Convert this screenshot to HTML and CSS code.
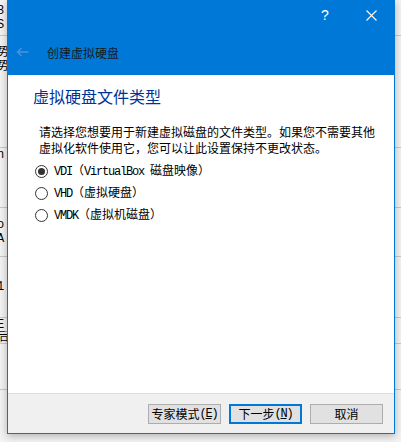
FILE: index.html
```html
<!DOCTYPE html>
<html lang="zh-CN">
<head>
<meta charset="utf-8">
<title>创建虚拟硬盘</title>
<link rel="stylesheet" href="styles.css">
</head>
<body>
<div class="backdrop">
  <div class="brow r1"><span class="frag">8</span><span class="frag">S</span></div>
  <div class="brow r2"><span class="frag">势</span><span class="frag">势</span></div>
  <div class="brow r3"><span class="frag">n</span></div>
  <div class="brow r4"><span class="frag">o</span><span class="frag">A</span></div>
  <div class="brow r5"><span class="frag">1</span></div>
  <div class="brow r6"><span class="frag">E</span><span class="frag">后</span></div>
  <div class="brow r7"></div>
  <div class="brow r8"></div>
</div>

<div class="dialog">
  <div class="titlebar">
    <div class="tbtn">?</div>
    <div class="tbtn">
      <svg width="11" height="11" viewBox="0 0 11 11"><path d="M0.5 0.5L10.5 10.5M10.5 0.5L0.5 10.5" stroke="#fff" stroke-width="1.1" fill="none"/></svg>
    </div>
  </div>
  <div class="header">
    <svg class="back" width="13" height="10" viewBox="0 0 13 10"><path d="M12.5 5H1.5M5.5 1L1.5 5L5.5 9" stroke="#4d92d6" stroke-width="1.4" fill="none"/></svg>
    <span class="htitle">创建虚拟硬盘</span>
  </div>
  <div class="content">
    <h1 class="heading">虚拟硬盘文件类型</h1>
    <p class="desc">请选择您想要用于新建虚拟磁盘的文件类型。如果您不需要其他<br>虚拟化软件使用它，您可以让此设置保持不更改状态。</p>
    <div class="options">
      <div class="opt"><span class="radio checked"></span><span class="label"><span class="mono">VDI</span>（<span class="mono">VirtualBox </span>磁盘映像）</span></div>
      <div class="opt"><span class="radio"></span><span class="label"><span class="mono">VHD</span>（虚拟硬盘）</span></div>
      <div class="opt"><span class="radio"></span><span class="label"><span class="mono">VMDK</span>（虚拟机磁盘）</span></div>
    </div>
  </div>
  <div class="footer">
    <button class="btn">专家模式<span class="mono">(<u>E</u>)</span></button>
    <button class="btn default">下一步<span class="mono">(<u>N</u>)</span></button>
    <button class="btn">取消</button>
  </div>
</div>
</body>
</html>
```

FILE: styles.css
```css
* { box-sizing: border-box; }
html, body { margin: 0; padding: 0; }
body {
  width: 401px;
  height: 442px;
  overflow: hidden;
  position: relative;
  background: #f0f0f0;
  font-family: "Noto Sans CJK SC", "Noto Sans", sans-serif;
  font-size: 12px;
  color: #000;
}
.mono {
  font-family: "Liberation Mono", monospace;
  font-size: 12px;
  letter-spacing: -1.2px;
}

/* background window */
.backdrop {
  display: flex;
  flex-direction: column;
  width: 401px;
  height: 442px;
  background: #f3f3f3;
  font-family: "Liberation Mono", "Noto Sans CJK SC", monospace;
  font-size: 12px;
}
.brow {
  border-bottom: 1px solid #c8c8c8;
  display: flex;
  flex-direction: column;
  justify-content: center;
  padding-left: 0;
  line-height: 14px;
  overflow: hidden;
}
.frag { display: block; width: 12px; overflow: hidden; margin-left: -3px; }
.r1 { height: 36px; }
.r2 { height: 112px; justify-content: flex-start; padding-top: 10px; }
.r3 { height: 60px; justify-content: flex-start; padding-top: 0; }
.r4 { height: 49px; }
.r5 { height: 61px; }
.r6 { height: 26px; }
.r7 { height: 46px; }
.r8 { flex: 1; border-bottom: none; }

/* dialog */
.dialog {
  position: absolute;
  left: 7px;
  top: 0;
  width: 388px;
  height: 434px;
  display: flex;
  flex-direction: column;
  border: 1px solid #0078d7;
  border-top: none;
  background: #fff;
  box-shadow: 0 2px 8px rgba(0,0,0,0.28);
}
.titlebar {
  height: 30px;
  background: #0078d7;
  display: flex;
  justify-content: flex-end;
}
.tbtn {
  width: 46px;
  height: 30px;
  display: flex;
  align-items: center;
  justify-content: center;
  color: #fff;
  font-family: "Liberation Sans", sans-serif;
  font-size: 14px;
}
.header {
  height: 45px;
  background: #0078d7;
  display: flex;
  align-items: center;
  padding: 1px 0 0 8px;
  gap: 18px;
}
.back { display: block; margin-top: -2px; }
.htitle { color: #1a1a1a; font-size: 12px; line-height: 16px; margin-top: -1px; }

.content {
  flex: 1;
  padding: 11px 0 0 25px;
}
.heading {
  margin: 0;
  font-size: 16px;
  font-weight: normal;
  line-height: 20px;
  color: #003399;
}
.desc {
  margin: 18px 0 0 6px;
  line-height: 16px;
  white-space: nowrap;
}
.options {
  margin: 4px 0 0 2px;
  display: flex;
  flex-direction: column;
}
.opt {
  height: 22px;
  display: flex;
  align-items: center;
  gap: 6px;
}
.radio {
  width: 13px;
  height: 13px;
  border: 1px solid #333;
  border-radius: 50%;
  background: #fff;
  display: flex;
  align-items: center;
  justify-content: center;
}
.radio.checked::after {
  content: "";
  width: 7px;
  height: 7px;
  border-radius: 50%;
  background: #333;
}
.label { line-height: 16px; }

.footer {
  height: 40px;
  background: #f0f0f0;
  border-top: 1px solid #dfdfdf;
  display: flex;
  align-items: center;
  justify-content: flex-end;
  gap: 8px;
  padding-right: 11px;
}
.btn {
  width: 73px;
  height: 20px;
  padding: 0;
  border: 1px solid #adadad;
  background: #e1e1e1;
  font-family: "Noto Sans CJK SC", sans-serif;
  font-size: 12px;
  line-height: 16px;
  color: #000;
  display: flex;
  align-items: center;
  justify-content: center;
}
.btn.default { border: 2px solid #0078d7; }
.btn u { text-decoration: underline; }
```
